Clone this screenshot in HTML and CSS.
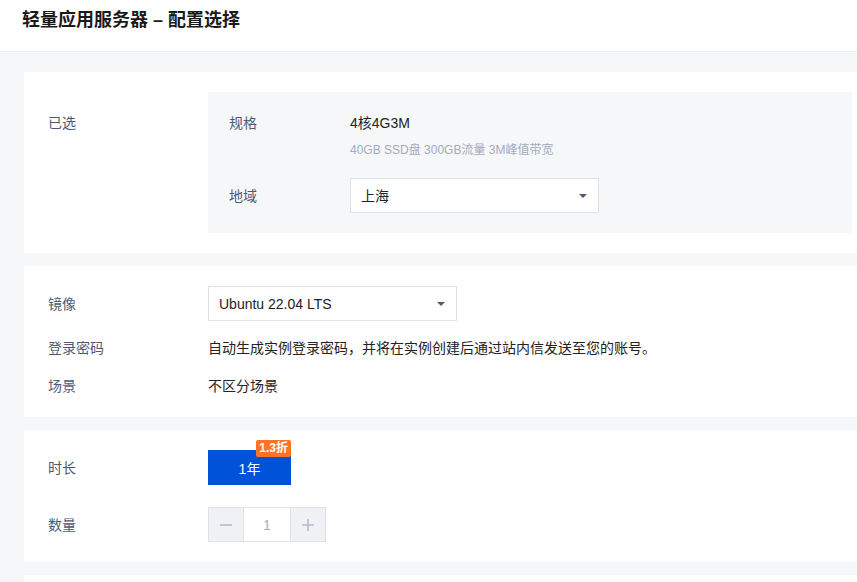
FILE: index.html
```html
<!DOCTYPE html>
<html lang="zh-CN">
<head>
    <meta charset="UTF-8">
    <meta name="viewport" content="width=device-width, initial-scale=1.0">
    <title>轻量应用服务器 - 配置选择</title>
    <link rel="stylesheet" href="styles.css">
</head>
<body>
    <div class="header">
        <h1>轻量应用服务器 – 配置选择</h1>
    </div>

    <div class="main">
        <!-- 已选配置 -->
        <div class="card">
            <div class="row top">
                <div class="label">已选</div>
                <div class="selected">
                    <div class="sub-row">
                        <div class="sub-label">规格</div>
                        <div>
                            <div class="value">4核4G3M</div>
                            <div class="hint">40GB SSD盘 300GB流量 3M峰值带宽</div>
                        </div>
                    </div>
                    <div class="sub-row region">
                        <div class="sub-label">地域</div>
                        <div class="select">
                            <span>上海</span>
                            <span class="caret"></span>
                        </div>
                    </div>
                </div>
            </div>
        </div>

        <!-- 镜像 -->
        <div class="card">
            <div class="row">
                <div class="label">镜像</div>
                <div class="select">
                    <span>Ubuntu 22.04 LTS</span>
                    <span class="caret"></span>
                </div>
            </div>
            <div class="row">
                <div class="label">登录密码</div>
                <div class="value">自动生成实例登录密码，并将在实例创建后通过站内信发送至您的账号。</div>
            </div>
            <div class="row">
                <div class="label">场景</div>
                <div class="value">不区分场景</div>
            </div>
        </div>

        <!-- 时长 / 数量 -->
        <div class="card">
            <div class="row">
                <div class="label">时长</div>
                <div class="period">
                    1年
                    <span class="badge">1.3折</span>
                </div>
            </div>
            <div class="row stepper-row">
                <div class="label">数量</div>
                <div class="stepper">
                    <span class="step-btn">
                        <svg width="14" height="14" viewBox="0 0 14 14"><path d="M1 7h12" stroke="#b5bdca" stroke-width="1.6"/></svg>
                    </span>
                    <span class="step-value">1</span>
                    <span class="step-btn">
                        <svg width="14" height="14" viewBox="0 0 14 14"><path d="M1 7h12M7 1v12" stroke="#b5bdca" stroke-width="1.6"/></svg>
                    </span>
                </div>
            </div>
        </div>

        <div class="card last"></div>
    </div>
</body>
</html>
```

FILE: styles.css
```css
body {
    margin: 0;
    background-color: #f6f7f9;
    font-family: "Liberation Sans", "Noto Sans CJK SC", sans-serif;
    font-size: 14px;
    color: #222;
    overflow: hidden;
}
.header {
    height: 52px;
    background-color: white;
    border-bottom: 1px solid #eceef2;
    box-sizing: border-box;
    padding: 8px 22px 0;
}
h1 {
    margin: 0;
    font-size: 18px;
    line-height: 24px;
    font-weight: bold;
    color: #1a1a1a;
}
.main {
    padding: 20px 0 0 24px;
}
.card {
    background-color: white;
    padding: 20px 5px 20px 24px;
    margin-bottom: 13px;
    display: flex;
    flex-direction: column;
    gap: 16px;
}
.card.last {
    height: 40px;
}
.row {
    display: flex;
    align-items: center;
}
.row.top {
    align-items: flex-start;
}
.row.top .label {
    padding-top: 20px;
}
.label {
    width: 160px;
    flex-shrink: 0;
    color: #4b5b76;
    line-height: 22px;
}
.value {
    line-height: 22px;
    color: #222;
}
.selected {
    flex: 1;
    background-color: #f6f7f9;
    padding: 20px 21px;
}
.sub-row {
    display: flex;
    align-items: flex-start;
}
.sub-row.region {
    margin-top: 18px;
    align-items: center;
}
.sub-label {
    width: 121px;
    color: #4b5b76;
    line-height: 22px;
}
.hint {
    font-size: 12px;
    line-height: 20px;
    margin-top: 6px;
    color: #a2acbd;
}
.select {
    width: 249px;
    height: 35px;
    box-sizing: border-box;
    border: 1px solid #dfe2e8;
    background-color: white;
    display: flex;
    align-items: center;
    justify-content: space-between;
    padding: 0 11px 0 10px;
    line-height: 22px;
}
.caret {
    width: 0;
    height: 0;
    border-left: 4px solid transparent;
    border-right: 4px solid transparent;
    border-top: 4px solid #4b5b76;
    margin-top: 1px;
}
.period {
    position: relative;
    width: 83px;
    height: 35px;
    background-color: #0052d9;
    color: white;
    display: flex;
    align-items: center;
    justify-content: center;
}
.badge {
    position: absolute;
    top: -10px;
    right: 0;
    height: 17px;
    padding: 0 3px;
    background-color: #ff7324;
    border-radius: 2px;
    color: white;
    font-size: 12px;
    font-weight: bold;
    line-height: 17px;
}
.stepper-row {
    margin-top: 6px;
}
.stepper {
    display: flex;
    height: 35px;
    border: 1px solid #dfe2e8;
    box-sizing: border-box;
}
.step-btn {
    width: 34px;
    background-color: #f0f1f4;
    display: flex;
    align-items: center;
    justify-content: center;
}
.step-value {
    width: 46px;
    border-left: 1px solid #dfe2e8;
    border-right: 1px solid #dfe2e8;
    display: flex;
    align-items: center;
    justify-content: center;
    color: #a2acbd;
}
```
